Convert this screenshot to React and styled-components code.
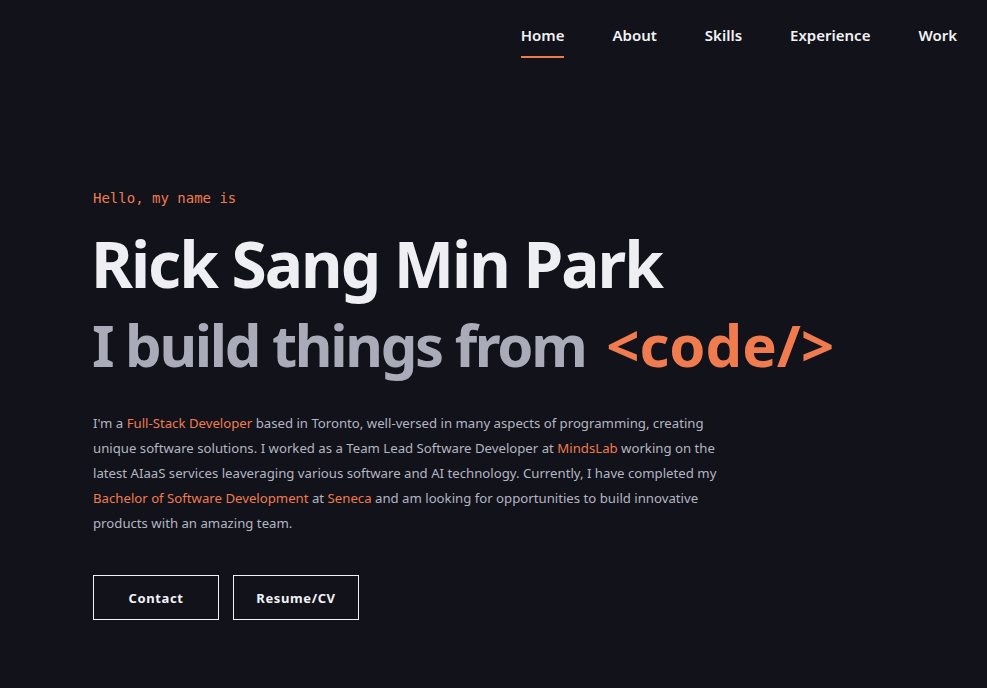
import React from "react";
import styled, { createGlobalStyle } from "styled-components";

const GlobalStyle = createGlobalStyle`
  html, body {
    margin: 0;
    padding: 0;
    background: #11121a;
  }
  body {
    font-family: "Noto Sans", "Open Sans", sans-serif;
    color: #eeeef2;
  }
`;

const links = ["Home", "About", "Skills", "Experience", "Work"];

export default function App() {
  return (
    <>
      <GlobalStyle />
      <Page>
        <Nav>
          {links.map((l, i) => (
            <NavLink key={l} $active={i === 0}>
              {l}
            </NavLink>
          ))}
        </Nav>
        <Hero>
          <Greeting>Hello, my name is</Greeting>
          <Name>Rick Sang Min Park</Name>
          <Tagline>
            I build things from <Accent>&lt;code/&gt;</Accent>
          </Tagline>
          <Intro>
            I'm a <Hl>Full-Stack Developer</Hl> based in Toronto, well-versed in
            many aspects of programming, creating unique software solutions. I
            worked as a Team Lead Software Developer at <Hl>MindsLab</Hl> working
            on the latest AIaaS services leaveraging various software and AI
            technology. Currently, I have completed my{" "}
            <Hl>Bachelor of Software Development</Hl> at <Hl>Seneca</Hl> and am
            looking for opportunities to build innovative products with an
            amazing team.
          </Intro>
          <Actions>
            <OutlineButton>Contact</OutlineButton>
            <OutlineButton>Resume/CV</OutlineButton>
          </Actions>
        </Hero>
      </Page>
    </>
  );
}

const Page = styled.div`
  min-height: 688px;
  background: #11121a;
  display: flex;
  flex-direction: column;
`;

const Nav = styled.nav`
  display: flex;
  justify-content: flex-end;
  gap: 48px;
  padding: 25px 30px 0 0;
`;

const NavLink = styled.a`
  font-size: 15px;
  font-weight: 600;
  color: #f2f2f5;
  padding-bottom: 11px;
  border-bottom: 2px solid ${(p) => (p.$active ? "#f07b4f" : "transparent")};
  cursor: pointer;
`;

const Hero = styled.section`
  padding: 132px 0 0 93px;
  display: flex;
  flex-direction: column;
  align-items: flex-start;
`;

const Greeting = styled.p`
  margin: 0;
  font-family: "DejaVu Sans Mono", "Liberation Mono", monospace;
  font-size: 14px;
  color: #f07b4f;
`;

const Name = styled.h1`
  margin: 18px 0 0 -2px;
  font-size: 64px;
  line-height: 80px;
  font-weight: 700;
  color: #efeff3;
  letter-spacing: -2px;
`;

const Tagline = styled.h2`
  margin: 0 0 0 -1px;
  font-size: 58px;
  line-height: 82px;
  font-weight: 700;
  color: #a9abb9;
  letter-spacing: -2.3px;
`;

const Accent = styled.span`
  color: #f07b4f;
  letter-spacing: 0;
  margin-left: 8px;
`;

const Intro = styled.p`
  margin: 25px 0 0;
  max-width: 626px;
  font-size: 13.2px;
  line-height: 25px;
  color: #b4b6c2;
`;

const Hl = styled.span`
  color: #f07b4f;
`;

const Actions = styled.div`
  display: flex;
  gap: 14px;
  margin-top: 39px;
`;

const OutlineButton = styled.button`
  width: 126px;
  height: 45px;
  background: transparent;
  border: 1px solid #f2f2f5;
  color: #f2f2f5;
  font-family: "Noto Sans", sans-serif;
  font-size: 13px;
  font-weight: 700;
  letter-spacing: 0.6px;
  cursor: pointer;
`;
